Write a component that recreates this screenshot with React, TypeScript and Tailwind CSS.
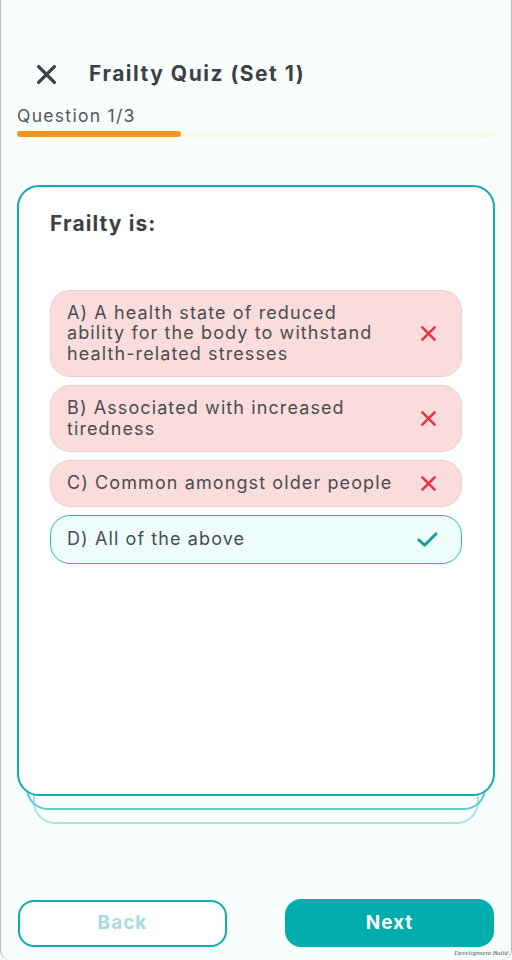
import React from "react";

const XIcon = ({ className }: { className?: string }) => (
  <svg viewBox="0 0 24 24" className={className} fill="none" stroke="currentColor" strokeWidth={3} strokeLinecap="round">
    <path d="M5 5 L19 19 M19 5 L5 19" />
  </svg>
);

const CheckIcon = ({ className }: { className?: string }) => (
  <svg viewBox="0 0 24 24" className={className} fill="none" stroke="currentColor" strokeWidth={3} strokeLinecap="round" strokeLinejoin="round">
    <path d="M3 12.5 L9 18 L21 6" />
  </svg>
);

type Opt = { lines: string[]; correct: boolean };

const options: Opt[] = [
  { lines: ["A) A health state of reduced", "ability for the body to withstand", "health-related stresses"], correct: false },
  { lines: ["B) Associated with increased", "tiredness"], correct: false },
  { lines: ["C) Common amongst older people"], correct: false },
  { lines: ["D) All of the above"], correct: true },
];

export default function App() {
  return (
    <div
      className="relative h-[960px] w-[512px] overflow-hidden rounded-b-[10px] border-x border-[#b9b9b9] bg-[#f8fdfd] text-[#3f4246]"
      style={{ fontFamily: "Inter, 'Noto Sans', sans-serif" }}
    >
      <div className="flex h-full flex-col px-[16px]">
        {/* Header */}
        <div className="mt-[54px] flex h-[40px] items-center">
          <XIcon className="ml-[16px] h-[27px] w-[27px] text-[#3f4246]" />
          <div className="ml-[29px] text-[21px] font-bold tracking-[1.5px] text-[#3d4044]">Frailty Quiz (Set 1)</div>
        </div>
        <div className="mt-[12px] text-[17.5px] leading-[20px] tracking-[1.3px] text-[#55585c]">Question 1/3</div>
        <div className="mt-[5px] h-[6px] w-full rounded-full bg-[#fdf7e6]">
          <div className="h-full w-[164px] rounded-full bg-[#f7931e]" />
        </div>

        {/* Card stack */}
        <div className="relative mt-[48px]">
          <div className="absolute inset-x-[16px] -bottom-[28px] h-[60px] rounded-b-[22px] border-2 border-t-0 border-[#a9e2e2]" />
          <div className="absolute inset-x-[9px] -bottom-[14px] h-[60px] rounded-b-[22px] border-2 border-t-0 border-[#5ccaca]" />
          <div className="relative h-[611px] rounded-[22px] border-2 border-[#0eacac] bg-white px-[31px]">
            <div className="mt-[21px] text-[21px] font-bold tracking-[1.1px] text-[#3d4044]">Frailty is:</div>
            <div className="mt-[50px] flex flex-col gap-[8px]">
              {options.map((o, i) => (
                <div
                  key={i}
                  className={
                    o.correct
                      ? "flex items-center justify-between rounded-[20px] border-[1.5px] border-[#2bb8b8] bg-[#eefcfc] py-[12px] pl-[16px] pr-[22px]"
                      : "flex items-center justify-between rounded-[20px] border-[1.5px] border-[#ebcfd1] bg-[#fadcdd] py-[12px] pl-[16px] pr-[22px]"
                  }
                >
                  <div className="whitespace-nowrap text-[18px] leading-[20.5px] tracking-[1.1px] text-[#4a4c50]">
                    {o.lines.map((l, j) => (
                      <div key={j}>{l}</div>
                    ))}
                  </div>
                  {o.correct ? (
                    <CheckIcon className="h-[23px] w-[23px] shrink-0 text-[#0f9f9a]" />
                  ) : (
                    <XIcon className="h-[21px] w-[21px] shrink-0 text-[#ec3344]" />
                  )}
                </div>
              ))}
            </div>
          </div>
        </div>

        {/* Buttons */}
        <div className="mt-auto mb-[13px] flex items-center justify-between px-[1px]">
          <button className="h-[47px] w-[209px] rounded-[16px] border-[2.5px] border-[#0eacac] bg-white text-[19px] font-bold tracking-[1px] text-[#a9dcdc]">
            Back
          </button>
          <button className="h-[48px] w-[209px] rounded-[16px] bg-[#00adad] text-[19px] font-bold tracking-[1px] text-white">
            Next
          </button>
        </div>
      </div>
      <div className="absolute bottom-[2px] right-[3px] text-[7px] italic text-[#555]" style={{ fontFamily: "'Liberation Serif', serif" }}>
        Development Build
      </div>
    </div>
  );
}
